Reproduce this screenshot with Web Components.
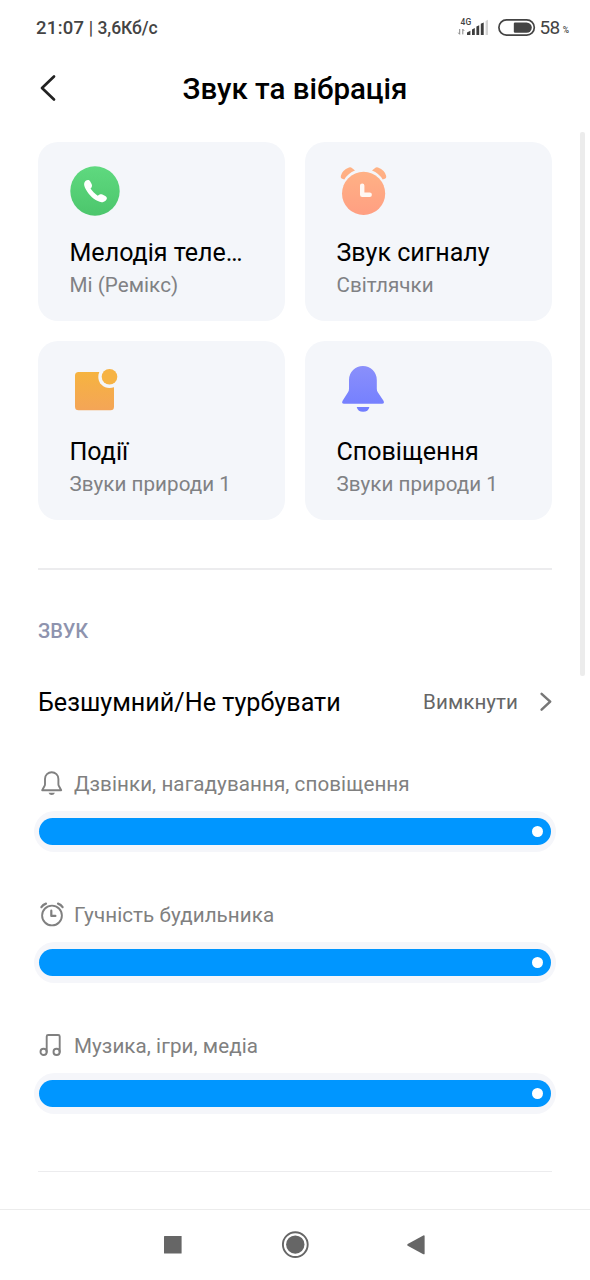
<!DOCTYPE html>
<html lang="uk">
<head>
<meta charset="utf-8">
<title>Звук та вібрація</title>
<style>
html,body{margin:0;padding:0;background:#fff}
body{font-family:Roboto,"Noto Sans",sans-serif;color:#000;width:590px;height:1280px;overflow:hidden}
</style>
</head>
<body>
<sound-settings></sound-settings>
<script>
const define=(name,css,html)=>customElements.define(name,class extends HTMLElement{
  constructor(){
    super();
    const t=document.createElement('template');
    t.innerHTML=`<style>*{box-sizing:border-box}svg{display:block;overflow:visible}${css}</style>${html}`;
    this.attachShadow({mode:'open'}).appendChild(t.content.cloneNode(true));
  }
});

define('status-bar',`
:host{display:flex;height:56px;align-items:center;justify-content:space-between;padding:0 21px 0 36px;box-sizing:border-box;color:#444}
.time{font-size:18.5px;font-weight:500;line-height:24px;white-space:pre;letter-spacing:.3px}
.time small{font-size:17.5px;letter-spacing:-.03px}
.right{display:flex;align-items:center}
.batt{margin:-2px 4.5px 0 9px}
.pct{font-size:19px;line-height:24px;letter-spacing:-.5px;margin-top:-1px}
.sign{font-size:8.5px;font-weight:500;margin:4px 0 0 3px}
`,`
<div class="time">21:07<small> | 3,6Кб/с</small></div>
<div class="right">
<svg width="31" height="20" viewBox="0 0 31 20"><text x="2.5" y="6.5" font-size="8.5" font-weight="500" letter-spacing=".2" fill="#444">4G</text>
<path d="M1.7 11v5.2M0.3 14.7l1.4 1.7M4.8 16.4v-5.2M4.8 11.2l1.4 1.7" stroke="#888" stroke-width="1" fill="none"/>
<g transform="translate(0 -1)"><path d="M9 18v-2.6l3.4-1.6V18zM14 18v-5.6l2.8-1.3V18zM18.4 18V9.6l2.8-1.4V18zM22.8 18V6.8l2.9-1.4V18z" fill="#3d3d3d"/><path d="M27.6 18V4l2.4-1.2V18z" fill="#d4d4d4"/></g></svg>
<svg class="batt" width="37" height="17" viewBox="0 0 37 17"><rect x=".9" y=".9" width="35.4" height="15.2" rx="7.6" fill="none" stroke="#444" stroke-width="1.7"/><path d="M17 3.4h11.6a5 5 0 0 1 0 10.4H17a1.2 1.2 0 0 1-1.2-1.2V4.6A1.2 1.2 0 0 1 17 3.4z" fill="#444"/></svg>
<span class="pct">58</span><span class="sign">%</span>
</div>`);

define('page-header',`
:host{display:grid;grid-template-columns:60px 1fr 60px;align-items:center;height:64px}
svg{margin-left:40px}
h1{margin:0;text-align:center;font-size:29.5px;line-height:40px;font-weight:500;white-space:nowrap;padding-top:1px}
`,`
<svg width="16" height="26" viewBox="0 0 16 26"><path d="M14 1.5 2 13l12 11.5" fill="none" stroke="#222" stroke-width="2.7" stroke-linecap="round" stroke-linejoin="round"/></svg>
<h1><slot></slot></h1>`);

define('sound-card',`
:host{display:flex;flex-direction:column;background:#f4f6fa;border-radius:20px;height:179px;padding:24px 31px 0}
.icon{height:50px;width:50px}
h2{margin:21px 0 0 .5px;font-size:25.05px;line-height:32px;font-weight:400;white-space:nowrap}
p{margin:2px 0 0 .5px;font-size:20.6px;line-height:28px;color:#808184;white-space:nowrap;letter-spacing:.05px}
`,`<div class="icon"><slot name="icon"></slot></div><h2><slot name="title"></slot></h2><p><slot></slot></p>`);

define('phone-icon','',`<svg width="50" height="50" viewBox="0 0 50 50"><defs><linearGradient id="g" x2="0" y2="1"><stop stop-color="#5fd97f"/><stop offset="1" stop-color="#4cc66c"/></linearGradient></defs><circle cx="26" cy="25" r="24.7" fill="url(#g)"/><path d="M16.4 15.1C18 13.5 20.1 13.4 21.1 15.2L22.6 17.9C23.5 19.7 22.8 21.3 21.5 22.6C23.1 25 25.7 27.7 28.7 29.8C30 28.4 31.7 27.8 33.4 28.5L36.3 29.9C38.4 31 38.3 33 36.8 34.4C34.5 36.6 31.7 36.6 28.8 35.1C23.2 32.4 18.6 27.2 16 21.7C14.8 19.2 14.7 16.8 16.4 15.1Z" fill="#fff"/></svg>`);

define('alarm-icon','',`<svg width="50" height="50" viewBox="0 0 50 50"><defs><linearGradient id="g" gradientUnits="userSpaceOnUse" x1="0" y1="0" x2="0" y2="49"><stop stop-color="#ffb385"/><stop offset="1" stop-color="#ff9f82"/></linearGradient></defs><g fill="url(#g)"><circle cx="27.6" cy="27.4" r="21.6"/><path d="M4.8 10Q6 4 13 1.4Q14.8.8 16.2 2.2L19 4.6Q12 7.4 8.3 13.6L5.6 12.4Q4.5 11.6 4.8 10Z"/><path transform="matrix(-1 0 0 1 55 0)" d="M4.8 10Q6 4 13 1.4Q14.8.8 16.2 2.2L19 4.6Q12 7.4 8.3 13.6L5.6 12.4Q4.5 11.6 4.8 10Z"/></g><path d="M26.2 19.6v9.2h7.5" fill="none" stroke="#fff7f2" stroke-width="4.4" stroke-linecap="round" stroke-linejoin="round"/></svg>`);

define('event-icon','',`<svg width="50" height="50" viewBox="0 0 50 50"><defs><linearGradient id="g" gradientUnits="userSpaceOnUse" x1="0" y1="3" x2="0" y2="45"><stop stop-color="#f6b53d"/><stop offset="1" stop-color="#f4a557"/></linearGradient></defs><rect x="6" y="6.9" width="39" height="38.4" rx="3.5" fill="url(#g)"/><circle cx="40.5" cy="11.9" r="11.2" fill="#f4f6fa"/><circle cx="40.5" cy="11.7" r="7.8" fill="#f6b344"/></svg>`);

define('bell-icon','',`<svg width="50" height="50" viewBox="0 0 50 50"><defs><linearGradient id="g" gradientUnits="userSpaceOnUse" x1="0" y1="0" x2="0" y2="47"><stop stop-color="#8b90fb"/><stop offset="1" stop-color="#717dff"/></linearGradient></defs><path d="M13 14.9a13.9 13.9 0 0 1 27.8 0v8.8q0 2 1 3.6l5.7 8.5q1.3 3-1.4 3H8q-2.8 0-1.4-3l5.4-8.5q1-1.6 1-3.6zM20.7 41.9h12.7q-1.1 4.9-6.3 4.9t-6.4-4.9z" fill="url(#g)"/></svg>`);

define('section-divider',`:host{display:block;height:2px;background:#ececee}`,``);

define('mode-row',`
:host{display:flex;align-items:center;height:40px}
.name{flex:1;font-size:25.15px;line-height:32px;white-space:nowrap;padding-top:2px}
.value{font-size:20.6px;line-height:28px;color:#666;letter-spacing:.05px}
svg{margin-left:22px}
`,`<span class="name"><slot></slot></span><span class="value"><slot name="value"></slot></span><svg width="12" height="20" viewBox="0 0 12 20"><path d="m1.6 1.8 8.6 7.9-8.6 7.9" fill="none" stroke="#777" stroke-width="2.5" stroke-linecap="round" stroke-linejoin="round"/></svg>`);

define('volume-slider',`
:host{display:block;height:131.2px}
.label{display:flex;align-items:center;height:28px;font-size:20.6px;color:#808080;white-space:nowrap;letter-spacing:.07px}
.ic{width:36px;height:26px}
.track{margin:13px -4px 0;height:41px;border-radius:21px;background:#f5f6fa;padding:7px 5px}
.fill{height:27px;border-radius:14px;background:#0096ff;display:flex;align-items:center;justify-content:flex-end;padding-right:8px}
.dot{width:11px;height:11px;border-radius:50%;background:#fff}
`,`<div class="label"><span class="ic"><slot name="icon"></slot></span><slot></slot></div><div class="track"><div class="fill"><div class="dot"></div></div></div>`);

const line='fill="none" stroke="#808080" stroke-width="1.9" stroke-linecap="round" stroke-linejoin="round"';
define('bell-line','',`<svg width="26" height="26" viewBox="0 1 26 26"><path ${line} d="M7 8.9a6.7 6.7 0 0 1 13.4 0v5.4q0 1 .5 1.7l2.3 4.2H4.2L6.5 16q.5-.7.5-1.7z"/><path d="M10.5 22.8h6.4q-.8 2.2-3.2 2.2t-3.2-2.2z" fill="#808080"/></svg>`);
define('alarm-line','',`<svg width="26" height="26" viewBox="0 .5 26 26"><g ${line}><circle cx="14" cy="14" r="9.9"/><path d="M3.4 5.7Q5 3.2 8 2.1M24.6 5.7Q23 3.2 20 2.1M13.3 9.2v5.2h4.1" stroke-width="2.2"/></g></svg>`);
define('music-line','',`<svg width="26" height="26" viewBox="0 1.7 26 26"><g ${line}><circle cx="5.6" cy="20.6" r="3.1"/><circle cx="18.6" cy="20.6" r="3.1"/><path d="M8.7 20.6V5.2q0-1.5 1.5-1.5h10q1.5 0 1.5 1.5v15.4"/></g></svg>`);

define('nav-bar',`
:host{display:grid;grid-template-columns:1fr 28px 1fr;align-items:center;height:71px;border-top:1px solid #ececec}
svg{justify-self:center}
.back{margin-right:68px}.recent{margin-left:64px}
`,`
<svg class="recent" width="18" height="18"><rect width="17.6" height="17.4" fill="#666" rx=".5"/></svg>
<svg width="28" height="28" viewBox="0 0 28 28"><circle cx="14.3" cy="13.6" r="12.4" fill="none" stroke="#666" stroke-width="1.9"/><circle cx="14.3" cy="13.6" r="9.2" fill="#666"/></svg>
<svg class="back" width="18" height="20" viewBox="0 0 18 20"><path d="M.7 8.9 16.3.4Q17.6 0 17.6 1v17.7q0 1-1.3.5L.7 10.7Q-.4 9.8.7 8.9z" fill="#666"/></svg>`);

define('sound-settings',`
:host{display:flex;flex-direction:column;position:relative;width:590px;height:1280px;overflow:hidden;background:#fff}
main{flex:1;padding:22px 38px 0;min-height:0;overflow:hidden}
.cards{display:grid;grid-template-columns:247px 247px;gap:20px}
section-divider{margin-top:48px}
h3{margin:47px 0 0;font-size:20px;line-height:28px;font-weight:500;color:#8e93ae}
mode-row{margin:37px 0 48px}
section-divider.end{margin-top:7.3px;height:1px}
.scroll{position:absolute;right:5px;top:132px;width:5px;height:544px;border-radius:2px;background:#ececec}
`,`
<status-bar></status-bar>
<page-header>Звук та вібрація</page-header>
<main>
<div class="cards">
<sound-card><phone-icon slot="icon"></phone-icon><span slot="title">Мелодія теле…</span>Мі (Ремікс)</sound-card>
<sound-card><alarm-icon slot="icon"></alarm-icon><span slot="title">Звук сигналу</span>Світлячки</sound-card>
<sound-card><event-icon slot="icon"></event-icon><span slot="title">Події</span>Звуки природи 1</sound-card>
<sound-card><bell-icon slot="icon"></bell-icon><span slot="title">Сповіщення</span>Звуки природи 1</sound-card>
</div>
<section-divider></section-divider>
<h3>ЗВУК</h3>
<mode-row>Безшумний/Не турбувати<span slot="value">Вимкнути</span></mode-row>
<volume-slider><bell-line slot="icon"></bell-line>Дзвінки, нагадування, сповіщення</volume-slider>
<volume-slider><alarm-line slot="icon"></alarm-line>Гучність будильника</volume-slider>
<volume-slider><music-line slot="icon"></music-line>Музика, ігри, медіа</volume-slider>
<section-divider class="end"></section-divider>
</main>
<nav-bar></nav-bar>
<div class="scroll"></div>`);
</script>
</body>
</html>
